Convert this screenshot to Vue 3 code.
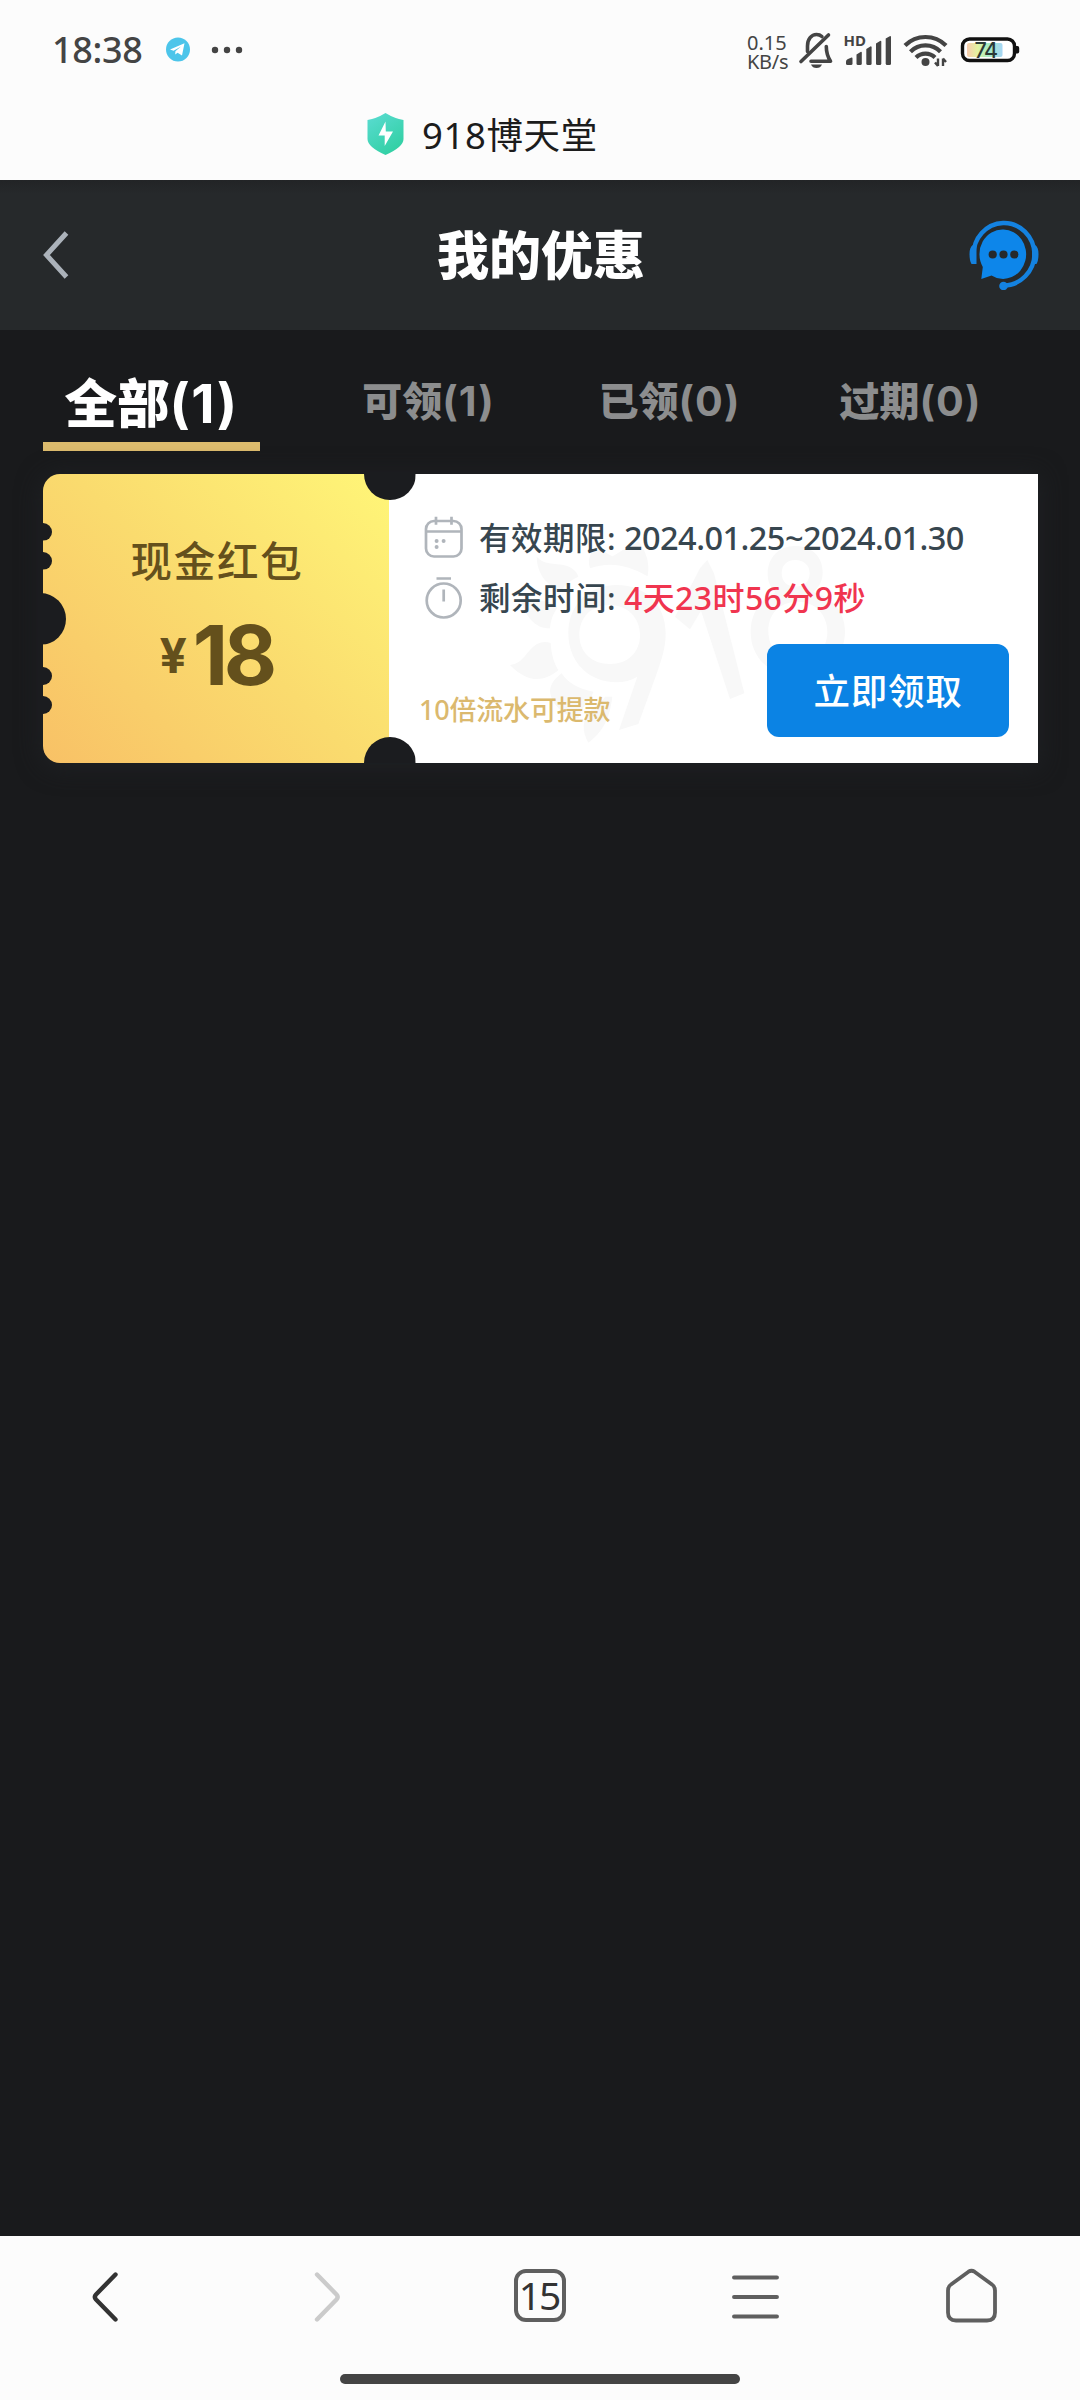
<script setup>
const tabs = [
  { label: '全部', count: 1, active: true },
  { label: '可领', count: 1, active: false },
  { label: '已领', count: 0, active: false },
  { label: '过期', count: 0, active: false },
]
const coupon = {
  name: '现金红包',
  amount: '18',
  period: '2024.01.25~2024.01.30',
  remain: '4天23时56分9秒',
  rule: '10倍流水可提款',
}
const holes = ['h1', 'h2', 'h3', 'h4', 'h5', 'top', 'bottom']
</script>

<template>
  <div class="screen">
    <header class="status">
      <span class="clock">18:38</span>
      <svg class="tg" viewBox="0 0 26 26" width="26" height="26">
        <circle cx="13" cy="12.5" r="12" fill="#4cc5ea" />
        <path d="M5 12.5 19.5 6.2 17 18.6 12.6 15.8 10.2 17.6 10.4 14.3 16 9.4 8.6 13.8Z" fill="#fff" />
      </svg>
      <svg class="dots" viewBox="0 0 32 8" width="32" height="8" fill="#444">
        <circle cx="4" cy="4" r="3.2" /><circle cx="16" cy="4" r="3.2" /><circle cx="28" cy="4" r="3.2" />
      </svg>
      <div class="speed"><span>0.15</span><span>KB/s</span></div>
      <svg class="sys" viewBox="796 28 230 44" width="230" height="44">
        <g fill="none" stroke="#444" stroke-width="3.6" stroke-linecap="round" stroke-linejoin="round">
          <path d="M801 61.5 828.5 35" />
          <path d="M807.5 51.5V46c0-7 4-11.5 9-11.5 2 0 4 .7 5.4 2" />
          <path d="M826.3 46.5c0 6 .6 9 4.2 14.8H811" />
        </g>
        <path d="M811 64.5h11q-1.5 3.6-5.5 3.6t-5.5-3.6z" fill="#444" />
        <g fill="#444">
          <path d="M846 61.500q0-1.500 1.500-2.300l4-1.700q1-.3 1 1V63.500q0 1.500-1.500 1.500h-3.500q-1.500 0-1.500-1.500z" />
          <path d="M856.500 54.500l4.500-2.700q.8 0 .8 1V63.500q0 1.500-1.500 1.500h-2.300q-1.500 0-1.500-1.500z" />
          <path d="M866.300 49l4.500-2.700q.8 0 .8 1V63.500q0 1.500-1.500 1.500h-2.300q-1.500 0-1.500-1.500z" />
          <path d="M876 43.500l4.500-2.700q.8 0 .8 1V63.500q0 1.500-1.500 1.500h-2.300q-1.500 0-1.500-1.500z" />
          <path d="M885.700 38.500l4.500-2.500q.8 0 .8 1V63.500q0 1.500-1.500 1.500h-2.300q-1.500 0-1.500-1.500z" />
        </g>
        <text x="843.500" y="46" class="hd">HD</text>
        <g fill="none" stroke="#444" stroke-width="4.200">
          <path d="M905 45.500a29 29 0 0 1 41 0" />
          <path d="M910.500 51.700a21 21 0 0 1 30 0" />
          <path d="M916 57.500a13.500 13.500 0 0 1 19 0" />
        </g>
        <circle cx="925.500" cy="62" r="4" fill="#444" />
        <path d="M938 58.500v7.500M938 66l-3-3.500M943 66v-7.500M943 58.500l3 3.500" fill="none" stroke="#444" stroke-width="2.400" />
        <defs>
          <linearGradient id="batt" x1="0" x2="1">
            <stop offset="0" stop-color="#f9cdb0" /><stop offset=".3" stop-color="#e3f3a0" />
            <stop offset=".6" stop-color="#a5ecc6" /><stop offset="1" stop-color="#a6d6f5" />
          </linearGradient>
        </defs>
        <rect x="962.500" y="39" width="52" height="21.500" rx="7" fill="#fff" stroke="#111" stroke-width="3.400" />
        <path d="M1016 46h1.500q1.700 0 1.700 2v3.500q0 2-1.700 2H1016z" fill="#111" />
        <rect x="967" y="43" width="35.500" height="14" rx="2" fill="url(#batt)" />
        <text x="985.500" y="57.700" text-anchor="middle" class="pct">74</text>
      </svg>
    </header>

    <div class="site">
      <svg viewBox="0 0 36 42" width="37" height="42">
        <defs>
          <linearGradient id="shield" x1="0" y1="0" x2=".6" y2="1">
            <stop offset="0" stop-color="#5bdcd3" /><stop offset="1" stop-color="#32d0a4" />
          </linearGradient>
        </defs>
        <path d="M18 0Q27 5.500 36 7v19q0 8-18 16Q0 34 0 26V7Q9 5.500 18 0z" fill="url(#shield)" />
        <path d="M18 8.500 11 22.500h6.200V33L25.500 18.500H18.300z" fill="#fff" />
      </svg>
      <span>918博天堂</span>
    </div>

    <div class="nav">
      <svg class="back" viewBox="0 0 26 48" width="26" height="48" fill="none" stroke="#abb2ba" stroke-width="5">
        <path d="M23.500 2 3.500 24 23.500 46" />
      </svg>
      <h1>我的优惠</h1>
      <svg class="service" viewBox="0 0 70 71" width="70" height="71">
        <path d="M4.500 37a30.500 32 0 1 1 61-2 31 32 0 0 1-31 31.500" fill="none" stroke="#1482e0" stroke-width="4.400" />
        <path d="M4 26Q.5 28 .5 35t2 10H7.500V26zM66 26q3.500 2 3.500 9t-2 10H63V26z" fill="#1482e0" />
        <circle cx="34.500" cy="67" r="4.300" fill="#1482e0" />
        <path d="M34.500 10.500a23 24.700 0 1 1-12 46L12.300 60l1.500-12A23 24.700 0 0 1 34.500 10.500z" fill="#0d86ea" />
        <g fill="#26292b"><circle cx="23.700" cy="35.500" r="4.100" /><circle cx="34.500" cy="35.500" r="4.100" /><circle cx="45.300" cy="35.500" r="4.100" /></g>
      </svg>
    </div>

    <div class="tabs">
      <div v-for="t in tabs" :key="t.label" class="tab" :class="{ active: t.active }">{{ t.label }}<span>({{ t.count }})</span></div>
    </div>

    <section class="coupon">
      <div class="left">
        <div class="name">{{ coupon.name }}</div>
        <div class="price"><span class="yen">¥</span><span class="num">{{ coupon.amount }}</span></div>
      </div>
      <div class="right">
        <svg class="mark" viewBox="0 0 1080 780" width="360" height="260" fill="#f8f8f8">
          <path fill-rule="evenodd" d="M350 255c90 0 147 62 147 145 0 45-12 78-26 118L415 672l-58 18 55-160c-20 12-40 17-62 17-85 0-145-62-145-147s60-145 145-145zm-22 60c-55 0-90 38-90 90s38 87 92 87 90-35 90-87-37-90-92-90z" />
          <path d="M525 350 600 205 622 180 642 220 733 580 690 597 603 332 570 388z" />
          <path fill-rule="evenodd" d="M885 138c50 0 83 32 83 78 0 27-10 45-28 60 55 15 95 58 95 118 0 80-60 136-140 136-82 0-143-55-143-135 0-56 30-98 75-118-16-14-24-32-24-56 0-48 34-83 82-83zm0 42c-24 0-40 16-40 40s16 40 42 40 42-16 42-40-18-40-44-40zm8 125c-52 0-88 35-88 88s36 90 90 90 87-37 87-88-36-90-89-90z" />
          <path d="M110 170c20 24 55 20 80 25 28 6 40 20 45 35-25 12-40 25-52 42-42-15-72-50-73-102zM270 205c-10-30 5-55 28-78 6 22 20 35 40 42 20-12 40-25 78-45 20 30 35 60 27 105-60-35-115-45-173-24zM62 300c25 12 60 0 82 5 15 4 23 10 28 18-14 20-20 40-22 62-40 2-72-30-88-85zM30 495c42-4 50-45 80-62 15-8 28-8 42-4 2 35 10 60 23 82-45 35-90 40-145-16zM185 520c20 32 55 48 95 55-8 30-35 40-45 80-40-5-80-40-85-80 0-22 15-40 35-55zM265 728c-20-35-20-70 10-100 20-20 38-30 40-38l22 0c-6 50-20 100-72 138z" />
        </svg>
        <div class="rows">
          <div class="row">
            <svg viewBox="0 0 40 44" width="40" height="44" fill="none" stroke="#b0b5bb" stroke-width="2.700">
              <rect x="2" y="5" width="35.500" height="35.500" rx="8" />
              <path d="M2 15.500h35.500M12 .8v8M27.500 .8v8" />
              <g fill="#b0b5bb" stroke="none"><circle cx="12.600" cy="25" r="2" /><circle cx="19.600" cy="25" r="2" /><circle cx="12.600" cy="31" r="2" /></g>
            </svg>
            <span class="key">有效期限:</span><span class="val">{{ coupon.period }}</span>
          </div>
          <div class="row">
            <svg viewBox="0 0 40 44" width="40" height="44" fill="none" stroke="#b0b5bb" stroke-width="2.700">
              <circle cx="19.700" cy="24.500" r="17" /><path d="M12.500 2.500h14.500M19.700 13.500v12" />
            </svg>
            <span class="key">剩余时间:</span><span class="val red">{{ coupon.remain }}</span>
          </div>
        </div>
        <div class="foot">
          <span class="rule">{{ coupon.rule }}</span>
          <button>立即领取</button>
        </div>
      </div>
      <i v-for="h in holes" :key="h" class="hole" :class="h"></i>
    </section>

    <div class="fill"></div>

    <footer class="browser">
      <div class="buttons">
        <svg viewBox="0 0 56 56" width="56" height="56" fill="none" stroke="#333" stroke-width="4.400" stroke-linecap="round" stroke-linejoin="round"><path d="M35.500 6.500 16 26.500q-2.300 2.500 0 5L35.500 51.500" /></svg>
        <svg viewBox="0 0 56 56" width="56" height="56" fill="none" stroke="#cbcbcb" stroke-width="4.400" stroke-linecap="round" stroke-linejoin="round"><path d="M21 6.500 40.500 26.500q2.300 2.500 0 5L21 51.500" /></svg>
        <div class="cell"><div class="count">15</div></div>
        <svg viewBox="0 0 56 56" width="56" height="56" fill="none" stroke="#5f5f5f" stroke-width="3.900" stroke-linecap="round"><path d="M6 9.500h43M6 29h43M6 48.500h43" /></svg>
        <svg viewBox="0 0 56 56" width="56" height="56" fill="none" stroke="#5f5f5f" stroke-width="3.800" stroke-linejoin="round"><path d="M4 22.500q0-4 3-6L24.500 3.700q3-2 6 0L48 16.500q3 2 3 6V44.500q0 8-8 8h-31q-8 0-8-8z" /></svg>
      </div>
      <div class="pill"></div>
    </footer>
  </div>
</template>

<style>
body { margin: 0; background: #191a1c; }
</style>

<style scoped>
.screen {
  width: 1080px;
  height: 2400px;
  display: flex;
  flex-direction: column;
  background: #191a1c;
  font-family: "Noto Sans", "Noto Sans CJK SC", sans-serif;
  overflow: hidden;
}
.status {
  height: 100px;
  box-sizing: border-box;
  padding: 0 54px 0 52px;
  display: flex;
  align-items: center;
  background: #fcfcfc;
  color: #444;
}
.clock { width: 112px; font-size: 36px; font-weight: 500; line-height: 50px; letter-spacing: -0.300px; }
.tg { margin-left: 1px; }
.dots { margin-left: 20px; }
.speed {
  margin-left: auto;
  width: 49px;
  display: flex;
  flex-direction: column;
  font-size: 20px;
  line-height: 19px;
  margin-top: 3px;
}
.speed span:last-child { letter-spacing: -0.300px; }
.sys { display: block; }
.hd { font-size: 15px; font-weight: 700; fill: #444; }
.pct { font: 500 21.500px Inter, sans-serif; letter-spacing: -1.500px; fill: #2c3a36; }
.site {
  height: 80px;
  padding-left: 367px;
  display: flex;
  align-items: flex-start;
  background: #fcfcfc;
  color: #1c1c1c;
}
.site svg { margin-top: 13px; }
.site span { margin-left: 18px; margin-top: 10px; font-size: 36.500px; line-height: 50px; letter-spacing: 0.600px; white-space: nowrap; }
.nav {
  height: 150px;
  box-sizing: border-box;
  padding: 0 41px 0 43px;
  display: flex;
  align-items: center;
  justify-content: space-between;
  background: linear-gradient(#222426 0, #26292b 14px);
}
.nav .back { width: 26px; margin-right: 44px; }
.nav .service { margin-top: -1px; }
.nav h1 { margin: -4px 0 0; font-size: 52px; line-height: 76px; font-weight: 900; color: #fff; font-family: "Noto Sans CJK SC", sans-serif; }
.tabs { display: flex; padding-left: 43px; height: 121px; color: #8c8d8e; }
.tab {
  width: 241px;
  text-align: center;
  font-family: "Noto Sans CJK SC", sans-serif;
  font-size: 40px;
  font-weight: 900;
  line-height: 139px;
  white-space: nowrap;
}
.tab span { font-family: Inter, sans-serif; font-weight: 700; font-size: 1.030em; letter-spacing: 0.025em; }
.tab.active {
  width: 217px;
  margin-right: 48px;
  box-sizing: border-box;
  border-bottom: 9px solid #dcbb6d;
  color: #fff;
  font-size: 52.500px;
  line-height: 140px;
  height: 121px;
}
.coupon {
  position: relative;
  display: flex;
  width: 995px;
  height: 289px;
  margin: 23px 0 0 43px;
  border-radius: 17px 0 0 17px;
  box-shadow: 0 3px 24px 2px #1f2124;
}
.left {
  width: 346px;
  display: flex;
  flex-direction: column;
  align-items: center;
  border-radius: 17px 0 0 17px;
  background: linear-gradient(45deg, #f8c166, #fadb6e 50%, #fff678);
  color: #64501c;
}
.name { margin-top: 57px; padding-left: 2px; font-size: 41.500px; line-height: 60px; font-weight: 500; letter-spacing: 1.700px; }
.price { display: flex; align-items: baseline; margin-top: 10px; height: 110px; line-height: 110px; font-family: Inter, sans-serif; font-weight: 700; }
.yen { font-size: 48px; margin-right: 6px; position: relative; top: -12px; }
.num { font-size: 82px; letter-spacing: -4.500px; }
.right { position: relative; flex: 1; background: #fff; display: flex; flex-direction: column; }
.mark { position: absolute; left: 111px; top: 26px; }
.rows { position: relative; padding: 42px 0 0 35px; }
.row { display: flex; align-items: center; height: 44px; margin-bottom: 16px; color: #37464f; font-size: 31.500px; line-height: 44px; font-weight: 500; white-space: nowrap; }
.key { width: 145px; margin-left: 15px; letter-spacing: 0.500px; }
.val { letter-spacing: -0.550px; font-size: 32.500px; }
.red { color: #f0354f; font-size: 32px; letter-spacing: 0.400px; }
.foot { position: relative; display: flex; justify-content: space-between; margin-top: 8px; padding: 0 29px 0 30px; }
.rule { margin-top: 46px; font-size: 27px; line-height: 40px; font-weight: 500; letter-spacing: -0.200px; color: #dbb96e; }
button {
  width: 242px;
  height: 93px;
  padding: 0 0 3px;
  border: 0;
  border-radius: 12px;
  background: #0b83e4;
  color: #fff;
  font: 500 36.500px "Noto Sans CJK SC", sans-serif;
  letter-spacing: 0.800px;
}
.hole { position: absolute; width: 52px; height: 52px; border-radius: 50%; background: #1b1c1f; }
.top { left: 320.500px; top: -26px; clip-path: inset(26px 0 0 0); }
.bottom { left: 320.500px; bottom: -26px; clip-path: inset(0 0 26px 0); }
.h1, .h2, .h4, .h5 { width: 18px; height: 18px; left: -9px; clip-path: inset(0 0 0 7px); }
.h1 { top: 48.500px; }
.h2 { top: 77.500px; }
.h3 { top: 118.500px; left: -29px; clip-path: inset(0 0 0 27px); }
.h4 { top: 193px; }
.h5 { top: 222px; }
.fill { flex: 1; }
.browser { height: 164px; background: #fcfcfc; }
.buttons { height: 138px; display: flex; align-items: flex-start; }
.buttons > svg { flex: 0 0 56px; margin: 32px 80px 0; }
.buttons > .cell { flex: 0 0 216px; display: flex; justify-content: center; }
.count {
  box-sizing: border-box;
  width: 52px;
  height: 53px;
  margin-top: 33px;
  border: 4px solid #5f5f5f;
  border-radius: 12px;
  font-size: 39px;
  line-height: 44px;
  text-align: center;
  color: #333;
  letter-spacing: -2px;
  text-indent: -2px;
}
.pill { width: 400px; height: 10px; border-radius: 5px; background: #444; margin: 0 auto; }
</style>
